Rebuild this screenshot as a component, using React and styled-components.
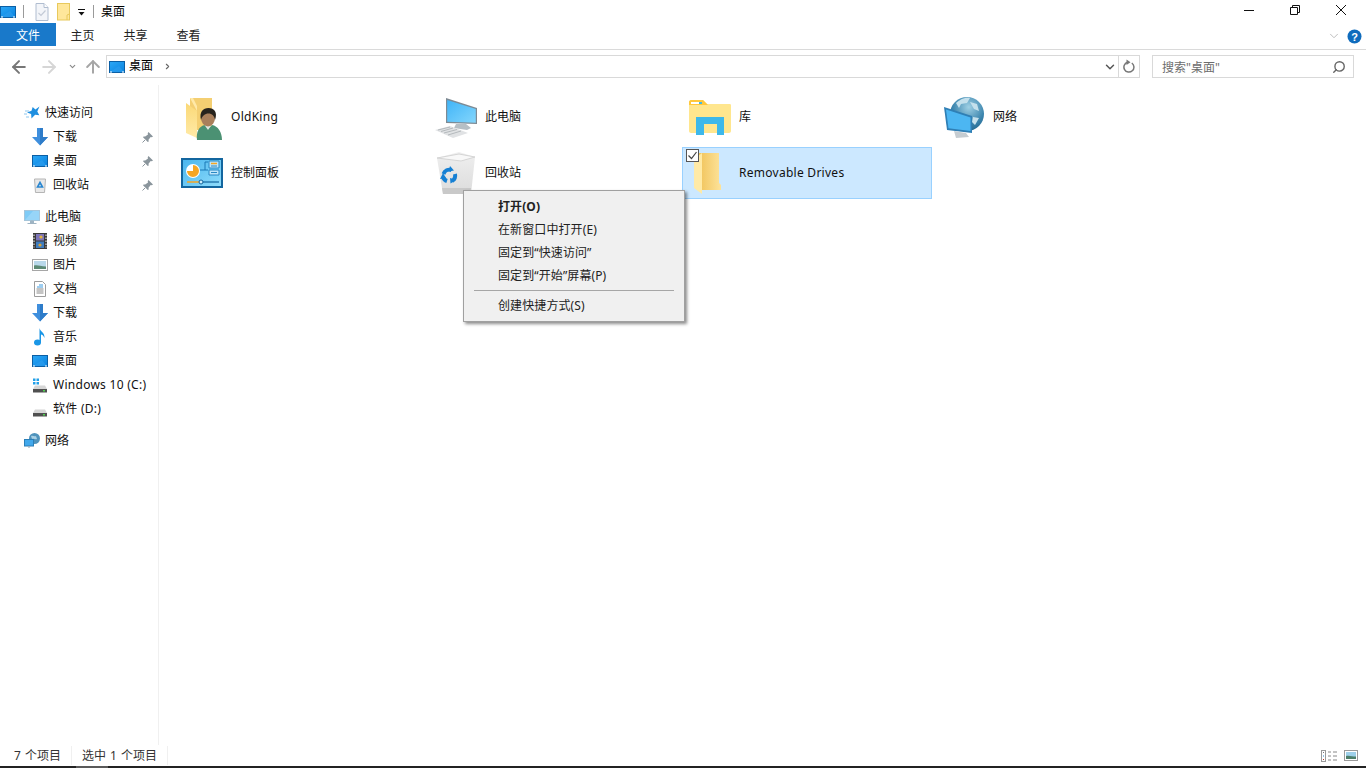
import React from "react";
import styled, { createGlobalStyle } from "styled-components";
import { ArrowLeft, ArrowRight, ArrowUp, ChevronDown, ChevronRight, Search } from "lucide-react";

const GlobalStyle = createGlobalStyle`
  html, body {
    margin: 0;
    padding: 0;
    background: #fff;
    overflow: hidden;
  }
  body {
    font-family: "Noto Sans", "Noto Sans CJK SC", sans-serif;
    font-size: 12px;
    color: #000;
  }
`;

const Window = styled.div`
  position: relative;
  width: 1366px;
  height: 768px;
  display: flex;
  flex-direction: column;
  overflow: hidden;
  background: #fff;
`;

const TitleBar = styled.div`
  height: 23px;
  display: flex;
  align-items: center;
  flex: none;
`;

const QuickTools = styled.div`
  display: flex;
  align-items: center;
  height: 23px;
`;

const ToolSeparator = styled.span`
  width: 1px;
  height: 13px;
  background: #9a9a9a;
  margin: ${(p) => p.$margin};
`;

const ToolGap = styled.span`
  width: ${(p) => p.$width}px;
`;

const TitleText = styled.span`
  margin-left: 7px;
  line-height: 22px;
`;

const WindowButtons = styled.div`
  margin-left: auto;
  display: flex;
  height: 23px;
  padding-right: 2px;
`;

const WindowButton = styled.div`
  width: 46px;
  height: 20px;
  display: flex;
  align-items: center;
  justify-content: center;
`;

const Ribbon = styled.div`
  height: 27px;
  flex: none;
  display: flex;
  align-items: flex-start;
  border-bottom: 1px solid #dadada;
  box-sizing: border-box;
`;

const FileTab = styled.div`
  width: 56px;
  height: 23px;
  background: #1979ca;
  color: #fff;
  text-align: center;
  line-height: 25px;
`;

const Tab = styled.div`
  width: 53px;
  height: 23px;
  text-align: center;
  line-height: 26px;
  color: #222;
`;

const RibbonEnd = styled.div`
  margin-left: auto;
  display: flex;
  align-items: center;
  height: 26px;
  padding-right: 4px;
  gap: 6px;
`;

const AddressRow = styled.div`
  height: 35px;
  flex: none;
  display: flex;
  align-items: flex-start;
  box-sizing: border-box;
  padding-top: 5px;
`;

const NavButtons = styled.div`
  width: 106px;
  height: 23px;
  display: flex;
  align-items: center;
  flex: none;
  padding-left: 9px;
  box-sizing: border-box;
`;

const NavButton = styled.span`
  display: flex;
  margin-right: ${(p) => p.$gap}px;
`;

const AddressBox = styled.div`
  width: 1034px;
  height: 23px;
  border: 1px solid #d9d9d9;
  box-sizing: border-box;
  display: flex;
  align-items: center;
  padding-left: 2px;
  flex: none;
`;

const Crumb = styled.span`
  margin-left: 4px;
  margin-right: 10px;
  line-height: 20px;
  padding-bottom: 2px;
`;

const AddressTools = styled.div`
  margin-left: auto;
  display: flex;
  align-items: center;
  height: 21px;
`;

const DropButton = styled.div`
  width: 16px;
  height: 21px;
  display: flex;
  align-items: center;
  justify-content: center;
  border-right: 1px solid #d9d9d9;
`;

const RefreshButton = styled.div`
  width: 20px;
  display: flex;
  justify-content: center;
`;

const SearchBox = styled.div`
  width: 202px;
  height: 23px;
  margin-left: 12px;
  border: 1px solid #d9d9d9;
  box-sizing: border-box;
  display: flex;
  align-items: center;
  justify-content: space-between;
  padding: 0 7px 0 9px;
  color: #6d6d6d;
  flex: none;
`;

const MirroredSearch = styled(Search)`
  transform: scaleX(-1);
`;

const Main = styled.div`
  flex: 1;
  display: flex;
  min-height: 0;
`;

const Sidebar = styled.nav`
  width: 159px;
  flex: none;
  border-right: 1px solid #f0f0f0;
  box-sizing: border-box;
  padding-top: 16px;
`;

const NavGroup = styled.div`
  margin-bottom: 8px;
`;

const NavRow = styled.div`
  height: 24px;
  display: flex;
  align-items: center;
  padding-left: ${(p) => (p.$top ? 24 : 32)}px;
  gap: 5px;
  color: #111;
`;

const NavLabel = styled.span`
  padding-bottom: 2px;
  letter-spacing: ${(p) => (p.$latin ? "0.27px" : "0")};
`;

const PinSlot = styled.span`
  margin-left: auto;
  margin-right: 5px;
  display: flex;
`;

const Content = styled.div`
  flex: 1;
  padding: 6px 0 0 15px;
  display: grid;
  grid-template-columns: repeat(4, 250px);
  grid-auto-rows: 52px;
  gap: 4px;
  align-content: start;
`;

const Tile = styled.div`
  position: relative;
  display: flex;
  align-items: center;
  gap: 5px;
  padding-left: 4px;
  box-sizing: border-box;
  border: 1px solid ${(p) => (p.$selected ? "#99d1ff" : "transparent")};
  background: ${(p) => (p.$selected ? "#cce8ff" : "transparent")};
  color: #111;
`;

const TileIcon = styled.span`
  display: flex;
  width: 48px;
  height: 48px;
  margin-left: -1px;
`;

const TileLabel = styled.span`
  padding-bottom: 2px;
  letter-spacing: ${(p) => (p.$latin ? "0.27px" : "0")};
`;

const CheckMark = styled.span`
  position: absolute;
  left: 3px;
  top: 1px;
  width: 13px;
  height: 13px;
  box-sizing: border-box;
  border: 1px solid #555;
  background: #fff;
  display: flex;
`;

const StatusBar = styled.div`
  height: 21px;
  flex: none;
  display: flex;
  align-items: center;
  color: #333;
  padding-left: 14px;
`;

const StatusPart = styled.span`
  width: ${(p) => p.$width}px;
  border-right: 1px solid #f0f0f0;
  margin-right: 10px;
  line-height: 19px;
  word-spacing: 1px;
`;

const ViewSwitch = styled.div`
  margin-left: auto;
  display: flex;
  align-items: center;
  gap: 6px;
  padding-right: 8px;
`;

const BottomEdge = styled.div`
  height: 2px;
  flex: none;
  background: #232323;
`;

const EdgeThumb = styled.div`
  width: 32px;
  height: 2px;
  margin-left: 76px;
  background: #5a5a5a;
`;

const ContextMenu = styled.div`
  position: absolute;
  left: 463px;
  top: 190px;
  width: 222px;
  box-sizing: border-box;
  background: #f0f0f0;
  border: 1px solid #a0a0a0;
  box-shadow: 2px 2px 3px rgba(0, 0, 0, 0.45);
  padding: 4px 0 4px;
  color: #222;
`;

const MenuItem = styled.div`
  height: 23px;
  line-height: 23px;
  padding-left: 34px;
  letter-spacing: 0.1px;
  font-weight: ${(p) => (p.$bold ? 700 : 400)};
`;

const MenuDivider = styled.div`
  height: 1px;
  background: #a6a6a6;
  margin: 3px 10px 3px 10px;
`;

const QuickDropIcon = styled.svg`
  margin: 2px 0 0 8px;
`;

const DesktopIcon = () => (
  <svg width="16" height="16" viewBox="0 0 16 16">
    <defs>
      <linearGradient id="desk" x1="0" y1="0" x2="1" y2="1">
        <stop offset="0" stopColor="#2ba6f5" />
        <stop offset="1" stopColor="#0a84e0" />
      </linearGradient>
    </defs>
    <rect x="0" y="2" width="16" height="12" fill="#0b5fa5" />
    <rect x="1" y="3" width="14" height="10" fill="url(#desk)" />
    <path d="M1 13 L10 7 L15 13Z" fill="#2f9fee" opacity="0.6" />
    <path d="M1 13h2M13 13h2" stroke="#fff" strokeWidth="1" />
  </svg>
);

const DocIcon = () => (
  <svg width="14" height="18" viewBox="0 0 14 18">
    <path d="M1 .5h8l4 4v13H1z" fill="#f3f5f9" stroke="#b0bdd0" />
    <path d="M9 .5v4h4" fill="#fff" stroke="#b0bdd0" />
    <path d="M3.5 10l2.5 2.5 4.5-5" fill="none" stroke="#c3cad6" strokeWidth="1.2" />
  </svg>
);

const SmallFolder = () => (
  <svg width="13" height="18" viewBox="0 0 13 18">
    <rect x=".5" y=".5" width="12" height="16.5" fill="#ffe79b" stroke="#e8c95d" />
    <path d="M10 17v-5l2.500-1" fill="none" stroke="#e8c95d" />
  </svg>
);

const DownArrow = () => (
  <svg width="16" height="18" viewBox="0 0 16 18">
    <path d="M5 0h6v9h5l-8 8.500L0 9h5z" fill="#3f8fdd" />
    <path d="M8 0h3v9h5l-8 8.500z" fill="#2e7cc9" />
  </svg>
);

const StarIcon = () => (
  <svg width="16" height="16" viewBox="0 0 16 16">
    <path d="M15.500 1.500l-2.200 5 2 3.800-4.200-.6-3.600 3.800-.4-4.500-4.100-1.600 4.500-1.600 1.200-3.800 2.700 2.600z" fill="#1f8fe0" />
    <path d="M1 6h4M0 9h3M2 12h3" stroke="#8cc6ee" strokeWidth="1" />
  </svg>
);

const BinSmall = () => (
  <svg width="16" height="16" viewBox="0 0 16 16">
    <path d="M2.500 2h11l-1 13.500h-9z" fill="#e8e8e8" stroke="#b5b5b5" />
    <path d="M8 5.500L10.500 10h-5z" fill="none" stroke="#2a86d0" strokeWidth="1.600" />
  </svg>
);

const PcSmall = () => (
  <svg width="16" height="16" viewBox="0 0 16 16">
    <rect x=".5" y="1.500" width="15" height="10" fill="#7fcbf6" stroke="#a5c5da" />
    <path d="M1 11 L9 2 H15 V11Z" fill="#a6dcfa" opacity="0.6" />
    <path d="M6.500 12h3v2h-3zM3.500 14.500h9" fill="#9fb4c3" stroke="#9fb4c3" />
  </svg>
);

const VideoIcon = () => (
  <svg width="16" height="16" viewBox="0 0 16 16">
    <rect x="1" y="0" width="14" height="16" fill="#3a3a3a" />
    <path d="M2 1.500v13M14 1.500v13" stroke="#ddd" strokeWidth="1.200" strokeDasharray="1.500 1.500" />
    <rect x="4" y="1" width="8" height="6.500" fill="#7c74b8" />
    <rect x="4" y="8.500" width="8" height="6.500" fill="#3f7dc0" />
    <circle cx="9" cy="4" r="1.600" fill="#e2b33c" />
    <circle cx="8" cy="12" r="1.600" fill="#d9a436" />
  </svg>
);

const PictureIcon = () => (
  <svg width="16" height="16" viewBox="0 0 16 16">
    <rect x=".5" y="2.500" width="15" height="11" fill="#fff" stroke="#a6a6a6" />
    <rect x="2" y="4" width="12" height="8" fill="#b9d8ea" />
    <path d="M2 12V8.500c3-1 6 .5 12 1V12z" fill="#5d8a75" />
  </svg>
);

const TextDocIcon = () => (
  <svg width="16" height="16" viewBox="0 0 16 16">
    <path d="M2.500.5h8l3 3v12h-11z" fill="#fff" stroke="#9c9c9c" />
    <path d="M7 4h4M5 6h6" stroke="#3d9be0" />
    <path d="M4.500 8h7M4.500 10h7M4.500 12h7" stroke="#8a8a8a" />
  </svg>
);

const MusicIcon = () => (
  <svg width="16" height="18" viewBox="0 0 16 18">
    <ellipse cx="5.500" cy="14.500" rx="3.500" ry="3" fill="#1a96e6" />
    <path d="M7.500 14.500V0c.5 3.500 5.500 4.500 5 10-1-2.500-2.500-3.500-3.500-3.500v8z" fill="#1a96e6" />
  </svg>
);

const DriveIcon = ({ windows }) => (
  <svg width="16" height="16" viewBox="0 0 16 16">
    {windows && (
      <path d="M1 1.500h2.500V4H1zM4.500 1.500H7V4H4.500zM1 5h2.500v2.500H1zM4.500 5H7v2.500H4.500z" fill="#22a0e8" />
    )}
    <path d="M3 8.500h10l2 3.500H1z" fill="#d6d6d6" />
    <rect x="1" y="12" width="14" height="3.500" fill="#505050" />
    <rect x="11" y="13" width="2" height="1.500" fill="#4fd04f" />
  </svg>
);

const NetSmall = () => (
  <svg width="16" height="16" viewBox="0 0 16 16">
    <circle cx="10.500" cy="5.500" r="5.500" fill="#4f93bc" />
    <path d="M7 3c2-1 3 1 5 0l1 3c-2 1-3-1-5 0z" fill="#a9d0e4" />
    <rect x=".5" y="6.500" width="9" height="6.500" fill="#41a8ec" stroke="#2a7fb8" />
    <path d="M3.500 13.500h3M5 13v2" stroke="#9ab0bf" strokeWidth="1.200" />
  </svg>
);

const PinIcon = () => (
  <svg width="11" height="11" viewBox="0 0 11 11">
    <path d="M6.500 0L11 4.500 9.800 5.300 8.700 5 6.500 7.800 6.700 9.500 5.800 10 1 5.200 1.600 4.400 3.200 4.500 6 2.400 5.700 1.200z" fill="#8a959c" />
    <path d="M3 8L.5 10.500" stroke="#8a959c" />
  </svg>
);

const RefreshIcon = () => (
  <svg width="13" height="15" viewBox="0 0 13 15">
    <path d="M8.800 4A5 5 0 1 1 4.500 3.300" fill="none" stroke="#777" strokeWidth="1.500" />
    <path d="M3.500 .5L7.500 3.300 3.500 6z" fill="#777" />
  </svg>
);

const UserFolderIcon = () => (
  <svg width="48" height="48" viewBox="0 0 48 48">
    <defs>
      <linearGradient id="uf" x1="0" y1="0" x2="0" y2="1">
        <stop offset="0" stopColor="#fbd977" />
        <stop offset="1" stopColor="#ffeaa8" />
      </linearGradient>
    </defs>
    <path d="M12 5h22v32H12z" fill="#f4cf72" />
    <path d="M8 10L19 18V45L8 40z" fill="url(#uf)" />
    <path d="M19 18L12 5h3l4 8z" fill="#ffe9a8" />
    <path d="M19 47c-1-8 2-14 8-15l3 4 4-4c6 1 10 7 10 15z" fill="#4b9173" />
    <path d="M26.500 32l3.500 5 3.500-5z" fill="#dfe7e3" />
    <ellipse cx="30" cy="25" rx="7" ry="8.500" fill="#a97f5b" />
    <path d="M23 27c-2-8 2-12 7.500-12s9.500 4 6.500 12c-.5-4-3-6.500-6.500-6.500s-6.500 2.500-7.500 6.500z" fill="#27231d" />
  </svg>
);

const ComputerIcon = () => (
  <svg width="48" height="48" viewBox="0 0 48 48">
    <defs>
      <linearGradient id="scr" x1="0" y1="0" x2="1" y2="1">
        <stop offset="0" stopColor="#3fb4f8" />
        <stop offset="1" stopColor="#84d6fc" />
      </linearGradient>
    </defs>
    <path d="M14 5L45 15V31L14 30z" fill="#7d8a94" />
    <path d="M15.200 7L43.800 16V29.800L15.200 28.800z" fill="url(#scr)" />
    <path d="M24 31h10l5 4-4 2-13-2z" fill="#b6bfc5" />
    <path d="M3 37L18 33 36 40 21 45z" fill="#e0e2e4" />
    <path d="M6 37L18 34M9 38.500L21 35M12 40L25 36.500M16 42L29 38" stroke="#b4b9bc" strokeWidth="1" />
  </svg>
);

const LibraryIcon = () => (
  <svg width="48" height="48" viewBox="0 0 48 48">
    <path d="M3 9c0-1 1-2 2-2h12l4 4h23c1 0 1 1 1 2v25c0 1-1 2-2 2H5c-1 0-2-1-2-2z" fill="#ffe68e" />
    <path d="M3 12V9c0-1 1-2 2-2h12l5 5z" fill="#ffc83d" />
    <path d="M5 9h8v2H5z" fill="#fff" />
    <path d="M13 9h3v2h-3z" fill="#3db8ea" />
    <path d="M10 42V24h28v18h-7V31H18v11z" fill="#3db8ea" />
  </svg>
);

const NetworkIcon = () => (
  <svg width="48" height="48" viewBox="0 0 48 48">
    <defs>
      <radialGradient id="globe" cx="0.550" cy="0.300" r="0.800">
        <stop offset="0" stopColor="#9fd0e4" />
        <stop offset="0.600" stopColor="#3a84ad" />
        <stop offset="1" stopColor="#1d5f86" />
      </radialGradient>
    </defs>
    <circle cx="27" cy="21" r="17" fill="url(#globe)" />
    <path d="M16 10c4-3 8-6 14-5l-3 5-6 1-2 4zM30 9l7 2 2 7-5-2zM33 24l6 1-4 7-3-3z" fill="#c4e0ec" />
    <path d="M4 14L32 23V40L7 37z" fill="#2f7fb5" />
    <path d="M6 16.500L30.500 24.500V38L8.500 35.300z" fill="#4cb6f2" />
    <path d="M14 38l12 2 3 4-13 1z" fill="#c5ccd1" />
  </svg>
);

const PanelIcon = () => (
  <svg width="48" height="48" viewBox="0 0 48 48">
    <defs>
      <linearGradient id="pan" x1="0" y1="0" x2="1" y2="1">
        <stop offset="0" stopColor="#4ab6ee" />
        <stop offset="1" stopColor="#8fdcfb" />
      </linearGradient>
    </defs>
    <rect x="3" y="9" width="42" height="30" fill="#13669f" />
    <rect x="5" y="11" width="38" height="26" fill="url(#pan)" />
    <circle cx="15" cy="22" r="7" fill="#fff" />
    <path d="M15 22V16a6 6 0 1 1-6 6z" fill="#f6a623" />
    <path d="M22 21h5v-8h3M27 21h3" fill="none" stroke="#1b79b6" />
    <path d="M31 12h10v7H31zM31 21h10v5H31z" fill="#bfe6fa" stroke="#2a88c4" />
    <path d="M33 14.500h6" stroke="#f6a623" strokeWidth="1.500" />
    <path d="M33 17h6M33 23.500h6" stroke="#2a88c4" />
    <path d="M9 33h12" stroke="#f6a623" strokeWidth="1.500" />
    <path d="M21 33h20" stroke="#13669f" strokeWidth="1.200" />
    <circle cx="23" cy="33" r="2" fill="#cfeefc" stroke="#13669f" />
  </svg>
);

const RecycleIcon = () => (
  <svg width="48" height="48" viewBox="0 0 48 48">
    <defs>
      <linearGradient id="bin" x1="0" y1="0" x2="0" y2="1">
        <stop offset="0" stopColor="#efefef" />
        <stop offset="1" stopColor="#dcdcdc" />
      </linearGradient>
    </defs>
    <path d="M5 9L27 3l16 5-4 37H11z" fill="url(#bin)" />
    <path d="M5 9l22-4 16 3-14 4z" fill="#f8f8f8" stroke="#d5d5d5" />
    <path d="M11 45l-1-6h29l-1 6z" fill="#c9c9c9" />
    <g fill="none" stroke="#1680d4" strokeWidth="4">
      <path d="M11.500 25a6.500 6.500 0 0 1 8-4" />
      <path d="M23 25a6.500 6.500 0 0 1-3 7" />
      <path d="M15 32a6.500 6.500 0 0 1-4-4" />
    </g>
    <path d="M18 17l4 4.500-5.500 1zM24 31l-5.500 3.500-.5-5.500zM8 30l3-6 3 5z" fill="#1680d4" />
  </svg>
);

const PlainFolderIcon = () => (
  <svg width="48" height="48" viewBox="0 0 48 48">
    <defs>
      <linearGradient id="pf" x1="0" y1="0" x2="1" y2="0">
        <stop offset="0" stopColor="#f0c258" />
        <stop offset="1" stopColor="#fde39a" />
      </linearGradient>
    </defs>
    <path d="M12 4h21v30l2 2v5H12z" fill="url(#pf)" />
    <path d="M8 10L16 4V45L8 39z" fill="#ffeaa6" />
  </svg>
);

const TickIcon = () => (
  <svg width="11" height="11" viewBox="0 0 11 11">
    <path d="M1.500 5.500l3 3 5-6.500" fill="none" stroke="#444" strokeWidth="1.200" />
  </svg>
);

const HelpIcon = () => (
  <svg width="15" height="15" viewBox="0 0 15 15">
    <circle cx="7.500" cy="7.500" r="7" fill="#0f6cbd" />
    <text x="7.500" y="11.500" textAnchor="middle" fontSize="11" fontWeight="700" fill="#fff" fontFamily="Liberation Sans, sans-serif">?</text>
  </svg>
);

const ListViewIcon = () => (
  <svg width="17" height="12" viewBox="0 0 17 12">
    <rect x=".5" y=".5" width="4" height="11" fill="#fff" stroke="#9a9a9a" />
    <path d="M2 2h1v1H2z" fill="#777" />
    <path d="M2 5.500h1v1H2z" fill="#2a86d0" />
    <path d="M2 9h1v1H2z" fill="#c0392b" />
    <path d="M7 2h3M12 2h4M7 6h3M12 6h4M7 10h3M12 10h4" stroke="#888" />
  </svg>
);

const TileViewIcon = () => (
  <svg width="14" height="11" viewBox="0 0 14 11">
    <rect x=".5" y=".5" width="13" height="10" fill="#fff" stroke="#9a9a9a" />
    <rect x="2" y="2" width="10" height="7" fill="#9ed0ea" />
    <path d="M2 9V6c3-1 6 .5 10 .5V9z" fill="#4d7f6a" />
  </svg>
);

const quickAccess = [
  { label: "下载", icon: <DownArrow /> },
  { label: "桌面", icon: <DesktopIcon /> },
  { label: "回收站", icon: <BinSmall /> },
];

const thisPc = [
  { label: "视频", icon: <VideoIcon /> },
  { label: "图片", icon: <PictureIcon /> },
  { label: "文档", icon: <TextDocIcon /> },
  { label: "下载", icon: <DownArrow /> },
  { label: "音乐", icon: <MusicIcon /> },
  { label: "桌面", icon: <DesktopIcon /> },
  { label: "Windows 10 (C:)", icon: <DriveIcon windows />, latin: true },
  { label: "软件 (D:)", icon: <DriveIcon />, latin: true },
];

const tiles = [
  { label: "OldKing", icon: <UserFolderIcon />, latin: true },
  { label: "此电脑", icon: <ComputerIcon /> },
  { label: "库", icon: <LibraryIcon /> },
  { label: "网络", icon: <NetworkIcon /> },
  { label: "控制面板", icon: <PanelIcon /> },
  { label: "回收站", icon: <RecycleIcon /> },
  { label: "Removable Drives", icon: <PlainFolderIcon />, selected: true, latin: true },
];

export default function App() {
  return (
    <Window>
      <GlobalStyle />
      <TitleBar>
        <QuickTools>
          <DesktopIcon />
          <ToolSeparator $margin="0 11px 0 7px" />
          <DocIcon />
          <ToolGap $width={8} />
          <SmallFolder />
          <QuickDropIcon width="8" height="7" viewBox="0 0 8 7">
            <path d="M0 .5h7" stroke="#111" />
            <path d="M.5 3h6L3.500 6.500z" fill="#111" />
          </QuickDropIcon>
          <ToolSeparator $margin="0 0 0 7px" />
        </QuickTools>
        <TitleText>桌面</TitleText>
        <WindowButtons>
          <WindowButton>
            <svg width="10" height="10" viewBox="0 0 10 10"><path d="M0 5.500h10" stroke="#111" /></svg>
          </WindowButton>
          <WindowButton>
            <svg width="10" height="10" viewBox="0 0 10 10">
              <path d="M.5 2.500h7v7h-7zM2.500 2.500v-2h7v7h-2" fill="none" stroke="#111" />
            </svg>
          </WindowButton>
          <WindowButton>
            <svg width="10" height="10" viewBox="0 0 10 10"><path d="M0 0l10 10M10 0L0 10" stroke="#111" /></svg>
          </WindowButton>
        </WindowButtons>
      </TitleBar>

      <Ribbon>
        <FileTab>文件</FileTab>
        <Tab>主页</Tab>
        <Tab>共享</Tab>
        <Tab>查看</Tab>
        <RibbonEnd>
          <ChevronDown size={14} color="#b5b5b5" strokeWidth={1.5} />
          <HelpIcon />
        </RibbonEnd>
      </Ribbon>

      <AddressRow>
        <NavButtons>
          <NavButton $gap={10}><ArrowLeft size={20} color="#777" strokeWidth={2.4} /></NavButton>
          <NavButton $gap={9}><ArrowRight size={20} color="#d6d6d6" strokeWidth={2.4} /></NavButton>
          <NavButton $gap={6}><ChevronDown size={9} color="#888" strokeWidth={3} /></NavButton>
          <NavButton $gap={0}><ArrowUp size={20} color="#a6a6a6" strokeWidth={2.4} /></NavButton>
        </NavButtons>
        <AddressBox>
          <DesktopIcon />
          <Crumb>桌面</Crumb>
          <ChevronRight size={9} color="#666" strokeWidth={3} />
          <AddressTools>
            <DropButton><ChevronDown size={14} color="#555" strokeWidth={2.5} /></DropButton>
            <RefreshButton><RefreshIcon /></RefreshButton>
          </AddressTools>
        </AddressBox>
        <SearchBox>
          <span>搜索"桌面"</span>
          <MirroredSearch size={14} color="#666" strokeWidth={2.4} />
        </SearchBox>
      </AddressRow>

      <Main>
        <Sidebar>
          <NavGroup>
            <NavRow $top><StarIcon /><NavLabel>快速访问</NavLabel></NavRow>
            {quickAccess.map((item) => (
              <NavRow key={item.label}>
                {item.icon}
                <NavLabel>{item.label}</NavLabel>
                <PinSlot><PinIcon /></PinSlot>
              </NavRow>
            ))}
          </NavGroup>
          <NavGroup>
            <NavRow $top><PcSmall /><NavLabel>此电脑</NavLabel></NavRow>
            {thisPc.map((item, i) => (
              <NavRow key={i}>
                {item.icon}
                <NavLabel $latin={item.latin}>{item.label}</NavLabel>
              </NavRow>
            ))}
          </NavGroup>
          <NavGroup>
            <NavRow $top><NetSmall /><NavLabel>网络</NavLabel></NavRow>
          </NavGroup>
        </Sidebar>
        <Content>
          {tiles.map((tile) => (
            <Tile key={tile.label} $selected={tile.selected}>
              {tile.selected && <CheckMark><TickIcon /></CheckMark>}
              <TileIcon>{tile.icon}</TileIcon>
              <TileLabel $latin={tile.latin}>{tile.label}</TileLabel>
            </Tile>
          ))}
        </Content>
      </Main>

      <StatusBar>
        <StatusPart $width={57}>7 个项目</StatusPart>
        <StatusPart $width={85}>选中 1 个项目</StatusPart>
        <ViewSwitch>
          <ListViewIcon />
          <TileViewIcon />
        </ViewSwitch>
      </StatusBar>
      <BottomEdge><EdgeThumb /></BottomEdge>

      <ContextMenu>
        <MenuItem $bold>打开(O)</MenuItem>
        <MenuItem>在新窗口中打开(E)</MenuItem>
        <MenuItem>固定到“快速访问”</MenuItem>
        <MenuItem>固定到“开始”屏幕(P)</MenuItem>
        <MenuDivider />
        <MenuItem>创建快捷方式(S)</MenuItem>
      </ContextMenu>
    </Window>
  );
}
